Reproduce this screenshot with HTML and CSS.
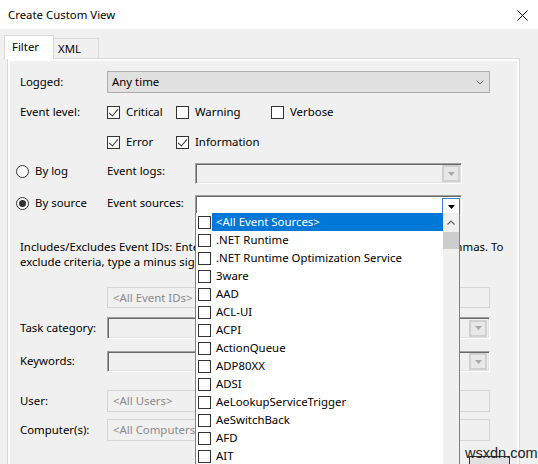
FILE: index.html
```html
<!DOCTYPE html>
<html>
<head>
<meta charset="utf-8">
<title>Create Custom View</title>
<link rel="stylesheet" href="styles.css">
</head>
<body>
<div class="titlebar">
  <span class="title">Create Custom View</span>
  <svg class="close" width="11" height="11" viewBox="0 0 11 11"><path d="M0.5 0.5L10.5 10.5M10.5 0.5L0.5 10.5" stroke="#000" stroke-width="1"/></svg>
</div>
<div class="tabs">
  <div class="tab active">Filter</div>
  <div class="tab">XML</div>
</div>
<div class="panel">
  <div class="page">
    <div class="row r-logged">
      <span class="lbl">Logged:</span>
      <div class="combo flat">
        <span>Any time</span>
        <svg width="8" height="5" viewBox="0 0 8 5"><path d="M0.5 0.5L4 4L7.5 0.5" fill="none" stroke="#606060"/></svg>
      </div>
    </div>
    <div class="row r-level1">
      <span class="lbl">Event level:</span>
      <div class="checks">
        <label class="chk c1"><span class="box on"></span>Critical</label>
        <label class="chk c2"><span class="box"></span>Warning</label>
        <label class="chk c3"><span class="box"></span>Verbose</label>
      </div>
    </div>
    <div class="row r-level2">
      <span class="lbl"></span>
      <div class="checks">
        <label class="chk c1"><span class="box on"></span>Error</label>
        <label class="chk c2"><span class="box on"></span>Information</label>
      </div>
    </div>
    <div class="row r-bylog">
      <label class="radio"><span class="dot"></span>By log</label>
      <span class="lbl2">Event logs:</span>
      <div class="combo sunk disabled src">
        <span class="btn dis"><svg width="7" height="4" viewBox="0 0 7 4"><path d="M0 0H7L3.5 4Z" fill="#a8a8a8"/></svg></span>
      </div>
    </div>
    <div class="row r-bysource">
      <label class="radio"><span class="dot on"></span>By source</label>
      <span class="lbl2">Event sources:</span>
      <div class="combo sunk src white">
        <span class="btn focus"><svg width="7" height="4" viewBox="0 0 7 4"><path d="M0 0H7L3.5 4Z" fill="#000"/></svg></span>
        <div class="list">
          <div class="items">
            <div class="item sel"><span class="box"></span><span class="txt">&lt;All Event Sources&gt;</span></div>
            <div class="item"><span class="box"></span><span class="txt">.NET Runtime</span></div>
            <div class="item"><span class="box"></span><span class="txt">.NET Runtime Optimization Service</span></div>
            <div class="item"><span class="box"></span><span class="txt">3ware</span></div>
            <div class="item"><span class="box"></span><span class="txt">AAD</span></div>
            <div class="item"><span class="box"></span><span class="txt">ACL-UI</span></div>
            <div class="item"><span class="box"></span><span class="txt">ACPI</span></div>
            <div class="item"><span class="box"></span><span class="txt">ActionQueue</span></div>
            <div class="item"><span class="box"></span><span class="txt">ADP80XX</span></div>
            <div class="item"><span class="box"></span><span class="txt">ADSI</span></div>
            <div class="item"><span class="box"></span><span class="txt">AeLookupServiceTrigger</span></div>
            <div class="item"><span class="box"></span><span class="txt">AeSwitchBack</span></div>
            <div class="item"><span class="box"></span><span class="txt">AFD</span></div>
            <div class="item"><span class="box"></span><span class="txt">AIT</span></div>
          </div>
          <div class="scroll">
            <span class="up"><svg width="8" height="5" viewBox="0 0 8 5"><path d="M0.5 4.5L4 1L7.5 4.5" fill="none" stroke="#606060" stroke-width="1.2"/></svg></span>
            <span class="thumb"></span>
          </div>
        </div>
      </div>
    </div>
    <p class="help">Includes/Excludes Event IDs: Enter ID numbers and/or ID ranges separated by commas. To<br>exclude criteria, type a minus sign first. For example 1,3,5-99,-76</p>
    <div class="row r-ids">
      <span class="lbl"></span>
      <div class="field">&lt;All Event IDs&gt;</div>
    </div>
    <div class="row r-task">
      <span class="lbl">Task category:</span>
      <div class="combo sunk disabled wide">
        <span class="btn dis"><svg width="7" height="4" viewBox="0 0 7 4"><path d="M0 0H7L3.5 4Z" fill="#a8a8a8"/></svg></span>
      </div>
    </div>
    <div class="row r-key">
      <span class="lbl">Keywords:</span>
      <div class="combo sunk disabled wide">
        <span class="btn dis"><svg width="7" height="4" viewBox="0 0 7 4"><path d="M0 0H7L3.5 4Z" fill="#a8a8a8"/></svg></span>
      </div>
    </div>
    <div class="row r-user">
      <span class="lbl">User:</span>
      <div class="field">&lt;All Users&gt;</div>
    </div>
    <div class="row r-comp">
      <span class="lbl">Computer(s):</span>
      <div class="field">&lt;All Computers&gt;</div>
    </div>
    <div class="row r-buttons">
      <div class="okbtn"></div>
    </div>
  </div>
</div>
<div class="watermark">wsxdn.com</div>
</body>
</html>
```

FILE: styles.css
```css
* { box-sizing: border-box; margin: 0; padding: 0; }
html, body { width: 538px; height: 464px; overflow: hidden; }
body {
  background: #f0f0f0;
  font-family: "Noto Sans", "Open Sans", sans-serif;
  font-size: 11.4px;
  line-height: 16px;
  color: #000;
  position: relative;
}
.titlebar {
  height: 29px;
  background: #fff;
  display: flex;
  align-items: center;
  justify-content: space-between;
  padding: 0 10px 0 8px;
}
.close { display: block; margin-top: 1px; }
.tabs {
  height: 29px;
  display: flex;
  align-items: flex-end;
  padding-left: 4px;
  position: relative;
  z-index: 2;
}
.tab {
  height: 20px;
  border: 1px solid #d9d9d9;
  border-bottom: none;
  background: #f0f0f0;
  padding-left: 4px;
  line-height: 19px;
}
.tab.active {
  height: 24px;
  width: 50px;
  margin-bottom: -1px;
  background: #fff;
  padding-left: 7px;
  line-height: 21px;
}
.tab:not(.active) { width: 45px; border-left: none; line-height: 20px; }
.panel {
  margin-left: 7px;
  width: 513px;
  height: 420px;
  border: 1px solid #d9d9d9;
  background: #fff;
  padding: 2px;
}
.page {
  background: #f0f0f0;
  height: 100%;
  padding: 10px 0 0 10px;
}
.row { display: flex; align-items: center; }
.lbl { width: 87px; flex: none; }
.r-logged { height: 22px; }
.r-level1 { height: 18px; margin-top: 10px; }
.r-level2 { height: 18px; margin-top: 12px; }
.r-bylog { height: 21px; margin-top: 12px; }
.r-bysource { height: 21px; margin-top: 11px; position: relative; z-index: 5; }
.help { margin-top: 23px; line-height: 15px; white-space: nowrap; }
.r-ids { height: 21px; margin-top: 18px; }
.r-task { height: 22px; margin-top: 9px; }
.r-key { height: 21px; margin-top: 12px; }
.r-key .lbl { margin-top: -2px; }
.r-user { height: 22px; margin-top: 18px; }
.r-comp { height: 22px; margin-top: 7px; }
.r-buttons { margin-top: 15px; padding-left: 449px; }

.combo {
  height: 100%;
  display: flex;
  align-items: center;
  position: relative;
}
.combo.flat {
  width: 383px;
  background: #e1e1e1;
  border: 1px solid #adadad;
  padding: 0 5px 0 4px;
  justify-content: space-between;
}
.combo.sunk {
  border-style: solid;
  border-width: 1px;
  border-color: #a0a0a0 #ffffff #ffffff #a0a0a0;
  box-shadow: inset 1px 1px 0 #696969, inset -1px -1px 0 #e3e3e3;
  justify-content: flex-end;
  padding-right: 1px;
}
.combo.src { width: 267px; }
.combo.wide { width: 383px; padding-right: 2px; }
.combo.white { background: #fff; align-items: flex-start; padding-top: 2px; }
.combo.disabled { background: #f0f0f0; }
.btn {
  width: 18px;
  height: 17px;
  display: flex;
  align-items: center;
  justify-content: center;
}
.btn.dis { background: #e8e8e8; border: 2px solid #d0d0d0; }
.btn.focus { background: #fff; border: 1px solid #3a84c9; }

.checks { display: flex; }
.chk { display: flex; align-items: center; }
.chk.c1 { width: 69px; }
.chk.c2 { width: 95px; }
.box {
  width: 13px;
  height: 13px;
  border: 1px solid #333;
  background: #fff;
  flex: none;
  margin-right: 6px;
  position: relative;
}
.box.on::after {
  content: "";
  position: absolute;
  left: 3px;
  top: 0px;
  width: 4px;
  height: 8px;
  border-right: 1px solid #333;
  border-bottom: 1px solid #333;
  transform: rotate(40deg);
}
.radio {
  width: 91px;
  margin-left: -4px;
  display: flex;
  align-items: center;
  flex: none;
  margin-top: -5px;
}
.dot {
  width: 13px;
  height: 13px;
  border: 1px solid #333;
  border-radius: 50%;
  background: #fff;
  margin-right: 6px;
  position: relative;
}
.dot.on::after {
  content: "";
  position: absolute;
  left: 2px;
  top: 2px;
  width: 7px;
  height: 7px;
  border-radius: 50%;
  background: #333;
}
.lbl2 { width: 88px; flex: none; margin-top: -5px; }

.list {
  position: absolute;
  left: -1px;
  top: 17px;
  width: 265px;
  height: 252px;
  background: #fff;
  border-left: 1px solid #828282;
  border-right: 1px solid #828282;
  display: flex;
  overflow: hidden;
}
.items { flex: 1; }
.item { height: 18px; display: flex; align-items: center; }
.item .box { margin: 0 1px 0 2px; border-color: #333; }
.item .txt { flex: 1; height: 18px; padding-left: 4px; line-height: 18px; white-space: nowrap; }
.item.sel .txt { background: #0078d7; color: #fff; }
.scroll {
  width: 16px;
  background: #f0f0f0;
  display: flex;
  flex-direction: column;
}
.up { height: 18px; display: flex; align-items: center; justify-content: center; }
.thumb { height: 17px; margin-top: 1px; background: #cdcdcd; }

.field {
  width: 383px;
  height: 100%;
  border: 1px solid #d6d6d6;
  background: #f0f0f0;
  color: #8a8a8a;
  padding-left: 5px;
  display: flex;
  align-items: center;
}
.okbtn {
  width: 41px;
  height: 22px;
  background: #e1e1e1;
  border: 1px solid #333;
  flex: none;
}
.watermark {
  position: absolute;
  left: 465px;
  top: 445px;
  font-family: "Liberation Sans", Arial, sans-serif;
  font-size: 14.5px;
  line-height: 17px;
  color: #222;
  z-index: 10;
}
```
